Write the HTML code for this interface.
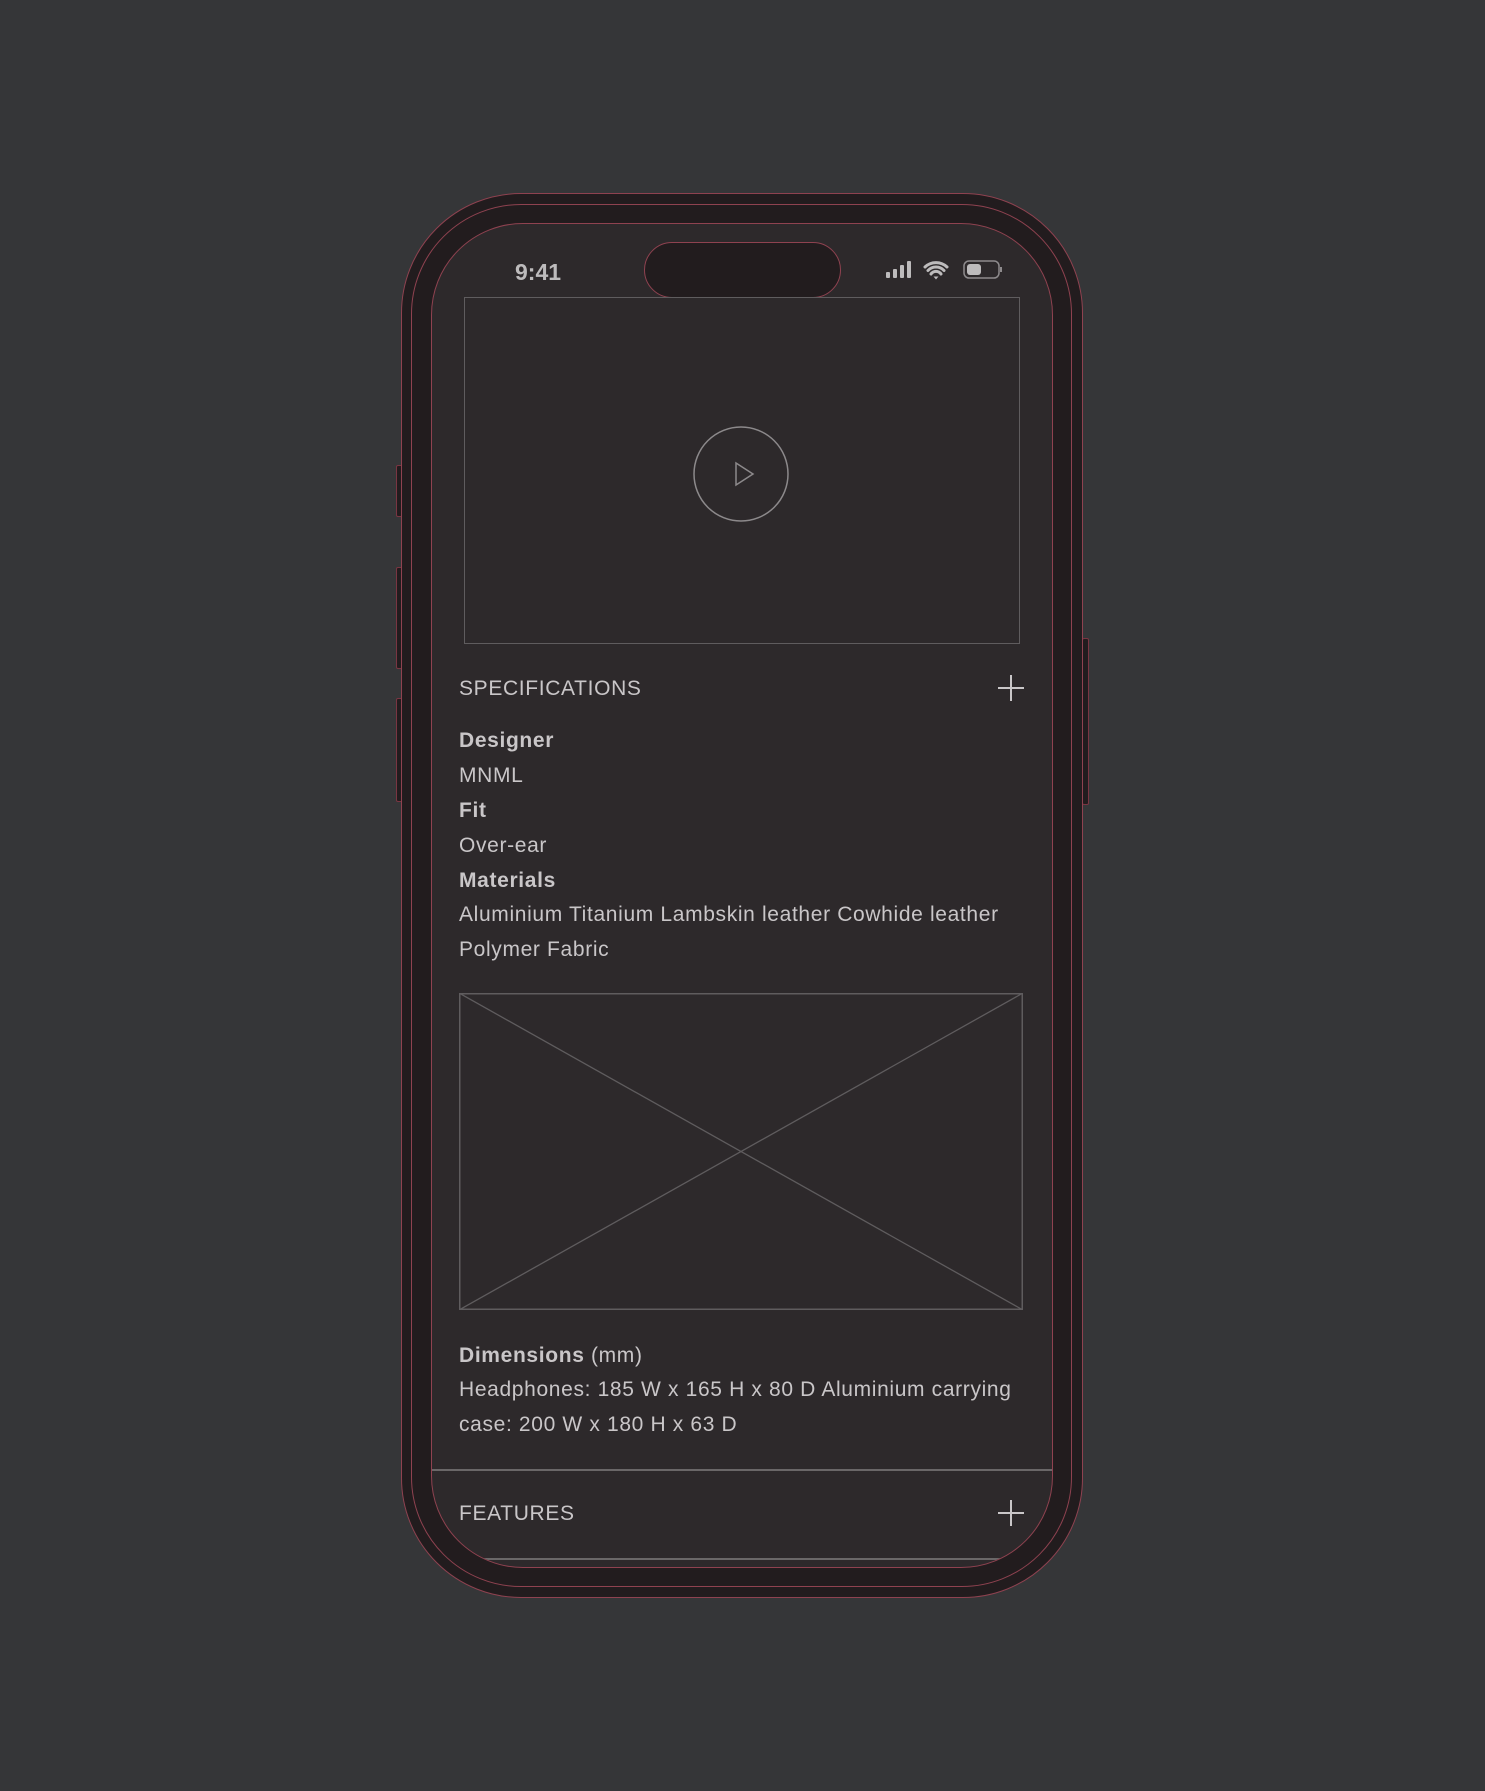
<!DOCTYPE html>
<html><head><style>
body{margin:0;width:1485px;height:1791px;background:#353638;position:relative;overflow:hidden;font-family:"Liberation Sans",sans-serif;color:#c9c6c8}
.a{position:absolute;box-sizing:border-box}
.t{position:absolute;font-size:21px;line-height:24px;white-space:nowrap;letter-spacing:0.65px}
b{font-weight:bold}
</style></head><body>
<div class="a" style="left:396px;top:465px;width:7px;height:52px;border:1px solid #7a3542;border-radius:2px;background:#221c1e"></div>
<div class="a" style="left:396px;top:567px;width:7px;height:102px;border:1px solid #7a3542;border-radius:2px;background:#221c1e"></div>
<div class="a" style="left:396px;top:698px;width:7px;height:104px;border:1px solid #7a3542;border-radius:2px;background:#221c1e"></div>
<div class="a" style="left:1082px;top:638px;width:7px;height:167px;border:1px solid #7a3542;border-radius:2px;background:#221c1e"></div>
<div class="a" style="left:401px;top:193px;width:682px;height:1405px;border:1.5px solid #8f4250;border-radius:120px;background:#221c1e"></div>
<div class="a" style="left:411px;top:204px;width:661px;height:1383px;border:1.5px solid #8f4250;border-radius:110px"></div>
<div class="a" style="left:431px;top:223px;width:622px;height:1345px;border:1.5px solid #8f4250;border-radius:92px;background:#2d292b;overflow:hidden">
  <div class="a" style="left:0;top:1245px;width:622px;height:2px;background:#6a6768"></div>
  <div class="a" style="left:0;top:1334px;width:622px;height:2px;background:#6a6768"></div>
</div>
<div class="a" style="left:644px;top:242px;width:197px;height:56px;border:1.5px solid #8f4250;border-radius:28px;background:#221c1e"></div>
<div class="t" style="left:515px;top:260px;font-size:23px;font-weight:bold;color:#bdbbbc;letter-spacing:0">9:41</div>
<svg class="a" style="left:884px;top:258px" width="122" height="24" viewBox="0 0 122 24">
 <g fill="#bdbbbc"><rect x="2" y="14" width="4" height="6" rx="1"/><rect x="9" y="11" width="4" height="9" rx="1"/><rect x="16" y="7" width="4" height="13" rx="1"/><rect x="23" y="3" width="4" height="17" rx="1"/></g>
 <path d="M41 9a16 16 0 0 1 22 0M44 12.5a11 11 0 0 1 16 0M47 16a6 6 0 0 1 10 0" stroke="#bdbbbc" stroke-width="3" fill="none" stroke-linecap="round"/><path d="M49.5 18.5l2.5 3 2.5-3z" fill="#bdbbbc"/>
 <rect x="80" y="3" width="35" height="17" rx="5" fill="none" stroke="#8e8b8d" stroke-width="1.5"/><rect x="83" y="6" width="14" height="11" rx="3" fill="#bdbbbc"/><path d="M117 9v5" stroke="#8e8b8d" stroke-width="2"/>
</svg>
<div class="a" style="left:464px;top:297px;width:556px;height:347px;border:1.5px solid #5f5c5e"></div>
<svg class="a" style="left:692px;top:425px" width="98" height="98"><circle cx="49" cy="49" r="47" fill="none" stroke="#8c898b" stroke-width="1.5"/><path d="M44 38v22l17-11z" fill="none" stroke="#8c898b" stroke-width="1.5"/></svg>
<div class="t" style="left:459px;top:677px">SPECIFICATIONS</div>
<svg class="a" style="left:998px;top:675px" width="26" height="26"><path d="M13 0v26M0 13h26" stroke="#c9c6c8" stroke-width="2"/></svg>
<div class="t" style="left:459px;top:729px"><b>Designer</b></div>
<div class="t" style="left:459px;top:764px">MNML</div>
<div class="t" style="left:459px;top:799px"><b>Fit</b></div>
<div class="t" style="left:459px;top:834px">Over-ear</div>
<div class="t" style="left:459px;top:869px"><b>Materials</b></div>
<div class="t" style="left:459px;top:903px">Aluminium Titanium Lambskin leather Cowhide leather</div>
<div class="t" style="left:459px;top:938px">Polymer Fabric</div>
<svg class="a" style="left:459px;top:993px" width="564" height="317"><rect x="0.75" y="0.75" width="562.5" height="315.5" fill="none" stroke="#5f5c5e" stroke-width="1.5"/><path d="M0 0L564 317M564 0L0 317" stroke="#5f5c5e" stroke-width="1.3"/></svg>
<div class="t" style="left:459px;top:1344px"><b>Dimensions</b> (mm)</div>
<div class="t" style="left:459px;top:1378px">Headphones: 185 W x 165 H x 80 D Aluminium carrying</div>
<div class="t" style="left:459px;top:1413px">case: 200 W x 180 H x 63 D</div>
<div class="t" style="left:459px;top:1502px">FEATURES</div>
<svg class="a" style="left:998px;top:1500px" width="26" height="26"><path d="M13 0v26M0 13h26" stroke="#c9c6c8" stroke-width="2"/></svg>
</body></html>
